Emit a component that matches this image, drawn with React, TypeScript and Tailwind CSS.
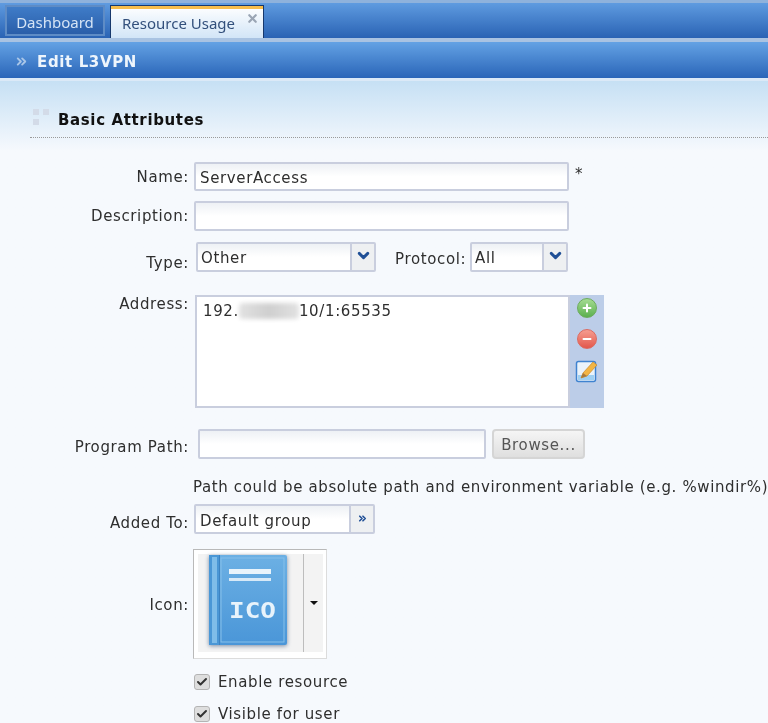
import { Check, ChevronDown, ChevronsRight, Minus, Plus, X } from "lucide-react";
import type { ReactNode } from "react";

const inputBox =
  "border-2 border-[#c9cede] bg-gradient-to-b from-[#eef1f5] via-white to-white rounded-[2px]";

function Label({ children, className = "" }: { children: ReactNode; className?: string }) {
  return <div className={`w-[189px] shrink-0 whitespace-nowrap text-right ${className}`}>{children}</div>;
}

function Select({ value, className }: { value: string; className: string }) {
  return (
    <div className={`${inputBox} flex h-[30px] ${className}`}>
      <div className="flex-1 pl-[3px] pt-[5px]">{value}</div>
      <div className="flex w-[24px] justify-center border-l-2 border-[#c9cede] bg-[#eef0f2] pt-[3px]">
        <ChevronDown className="h-[17px] w-[17px] text-[#1f4f96]" strokeWidth={4} />
      </div>
    </div>
  );
}

function BookIcon() {
  return (
    <svg width="80" height="94" viewBox="0 0 80 94" className="tracking-normal drop-shadow-[0_1px_2px_rgba(40,70,110,0.6)]">
      <defs>
        <linearGradient id="cover" x1="0" y1="0" x2="0" y2="1">
          <stop offset="0" stopColor="#6cb0e4" />
          <stop offset="1" stopColor="#4a96d8" />
        </linearGradient>
      </defs>
      <rect x="0" y="1" width="78" height="90" rx="2" fill="url(#cover)" />
      <rect x="0" y="1" width="10" height="90" fill="#4a97d6" />
      <rect x="3" y="3" width="5" height="86" fill="#7fbde9" />
      <rect x="10" y="1" width="1" height="90" fill="#3c83c2" />
      <rect x="12" y="4" width="63" height="84" fill="none" stroke="#86c0ea" strokeWidth="1" />
      <rect x="20" y="15" width="42" height="5" fill="#e8f3fb" />
      <rect x="20" y="24" width="42" height="3" fill="#d7e9f7" />
      <text
        x="20"
        y="64"
        textLength="47"
        lengthAdjust="spacingAndGlyphs"
        fontFamily="'DejaVu Sans Mono', monospace"
        fontSize="22"
        fontWeight="700"
        fill="#e8f3fb"
      >
        ICO
      </text>
    </svg>
  );
}

function Checkbox({ label, className = "" }: { label: string; className?: string }) {
  return (
    <div className={`flex items-center pl-[194px] ${className}`}>
      <div className="flex h-[16px] w-[16px] items-center justify-center rounded-[3px] border border-[#b4b4b4] bg-[#dedede]">
        <Check className="h-[12px] w-[12px] text-[#333]" strokeWidth={4} />
      </div>
      <span className="ml-[8px] pt-[1px]">{label}</span>
    </div>
  );
}

export default function App() {
  return (
    <div className="h-[723px] w-[768px] overflow-hidden bg-[#f6f9fd] font-['DejaVu_Sans',sans-serif] text-[15px] leading-[18px] tracking-[0.63px] text-[#2e2e2e] blur-[0.5px]">
      {/* Tabs */}
      <div className="flex h-[38px] items-end gap-[5px] border-t-[3px] border-[#8fb2dc] bg-gradient-to-b from-[#5f9be0] to-[#2a63b4] pl-[5px] font-['Noto_Sans',sans-serif] tracking-normal">
        <div className="mb-[2px] flex h-[31px] w-[100px] items-center justify-center border-2 border-[#5e8cc6] bg-gradient-to-b from-[#3f7cc8] to-[#2a5ea9] pt-[3px] text-[#d5e4f5]">
          Dashboard
        </div>
        <div className="relative flex h-[33px] w-[154px] items-center border border-b-0 border-[#17386c] bg-gradient-to-b from-white to-[#d2e5f7] pl-[11px] pt-[1px] text-[#33507c] before:absolute before:inset-x-0 before:top-0 before:h-[3px] before:bg-[#f7bd4b]">
          Resource Usage
          <X className="absolute right-[4px] top-[6px] h-[13px] w-[13px] text-[#9aa5b4]" strokeWidth={4} />
        </div>
      </div>
      <div className="h-[4px] bg-[#a9c3e2]" />
      {/* Header */}
      <div className="flex h-[36px] items-center bg-gradient-to-b from-[#64a2e4] to-[#2a65b8] pl-[14px] pt-[3px] text-[#eef5fc]">
        <ChevronsRight className="h-[15px] w-[15px] text-[#a9c6e8]" strokeWidth={3} />
        <span className="ml-[8px] font-bold">Edit L3VPN</span>
      </div>
      <div className="h-[3px] bg-[#dbe9f7]" />

      {/* Section */}
      <div className="h-[700px] bg-gradient-to-b from-[#c6e0f4] to-[#f6f9fd] to-[10%]">
        <div className="relative ml-[30px] flex h-[57px] items-end border-b border-dotted border-[#9a9a9a] pb-[8px] pl-[28px]">
          <div className="absolute left-[3px] top-[28px] grid grid-cols-2 gap-[4px]">
            <div className="h-[6px] w-[6px] bg-[#d3dbe8]" />
            <div className="h-[6px] w-[6px] bg-[#d3dbe8]" />
            <div className="h-[6px] w-[6px] bg-[#d3dbe8]" />
          </div>
          <span className="font-bold text-[#111]">Basic Attributes</span>
        </div>

        {/* Name */}
        <div className="mt-[24px] flex">
          <Label className="pt-[6px]">Name:</Label>
          <div className={`${inputBox} ml-[5px] h-[29px] w-[375px] pl-[4px] pt-[5px]`}>ServerAccess</div>
          <span className="ml-[6px] pt-[3px]">*</span>
        </div>

        {/* Description */}
        <div className="mt-[10px] flex">
          <Label className="pt-[6px]">Description:</Label>
          <div className={`${inputBox} ml-[5px] h-[30px] w-[375px]`} />
        </div>

        {/* Type / Protocol */}
        <div className="mt-[11px] flex">
          <Label className="pt-[12px]">Type:</Label>
          <Select value="Other" className="ml-[7px] w-[180px]" />
          <span className="ml-[19px] w-[71px] whitespace-nowrap pt-[8px]">Protocol:</span>
          <Select value="All" className="ml-[4px] w-[98px]" />
        </div>

        {/* Address */}
        <div className="mt-[23px] flex">
          <Label>Address:</Label>
          <div className="ml-[6px] flex h-[113px] w-[409px]">
            <div className="w-[375px] border-2 border-[#c9cede] bg-white pl-[6px] pt-[5px]">
              <div className="flex">
                <span>192.</span>
                <div className="mt-[1px] h-[16px] w-[60px] rounded-[4px] bg-gradient-to-r from-[#e2e2e2] via-[#cfcfcf] to-[#e2e2e2] blur-[2px]" />
                <span>10/1:65535</span>
              </div>
            </div>
            <div className="flex w-[34px] flex-col items-center gap-[11px] bg-[#bccde8] pt-[3px]">
              <div className="flex h-[20px] w-[20px] items-center justify-center rounded-full border border-[#6cab5c] bg-gradient-to-b from-[#a4dc92] to-[#5bb04f]">
                <Plus className="h-[12px] w-[12px] text-white" strokeWidth={4} />
              </div>
              <div className="flex h-[20px] w-[20px] items-center justify-center rounded-full border border-[#dc6a60] bg-gradient-to-b from-[#f59c90] to-[#e2574c]">
                <Minus className="h-[12px] w-[12px] text-white" strokeWidth={4} />
              </div>
              <svg width="24" height="24" viewBox="0 0 24 24" className="-mt-[1px]">
                <rect x="1.5" y="2.5" width="19" height="20" rx="2" fill="#eaf3fb" stroke="#3f83d0" strokeWidth="1.5" />
                <rect x="3" y="16" width="16" height="5" fill="#9fd0f2" />
                <path d="M6 19 L8 14 L18 3 L22 6 L12 17 Z" fill="#f2b544" stroke="#c98a2a" strokeWidth="0.7" />
                <path d="M6 19 L8 14 L12 17 Z" fill="#a8793c" />
              </svg>
            </div>
          </div>
        </div>

        {/* Program Path */}
        <div className="mt-[21px] flex">
          <Label className="pt-[9px]">Program Path:</Label>
          <div className={`${inputBox} ml-[9px] h-[30px] w-[288px]`} />
          <div className="ml-[6px] flex h-[30px] w-[93px] items-center justify-center rounded-[4px] border-2 border-[#d5d5d5] bg-gradient-to-b from-[#f5f5f5] to-[#dfdfdf] pt-[2px] text-[#555]">
            Browse...
          </div>
        </div>

        {/* Hint */}
        <div className="mt-[19px] whitespace-nowrap pl-[193px]">
          Path could be absolute path and environment variable (e.g. %windir%)
        </div>

        {/* Added To */}
        <div className="mt-[8px] flex">
          <Label className="pt-[10px]">Added To:</Label>
          <div className={`${inputBox} ml-[5px] flex h-[30px] w-[181px]`}>
            <div className="flex-1 pl-[4px] pt-[6px]">Default group</div>
            <div className="flex w-[24px] justify-center border-l-2 border-[#c9cede] bg-[#eef0f2] pt-[7px]">
              <ChevronsRight className="h-[11px] w-[11px] text-[#1f4f96]" strokeWidth={3.5} />
            </div>
          </div>
        </div>

        {/* Icon */}
        <div className="mt-[15px] flex">
          <Label className="pt-[47px]">Icon:</Label>
          <div className="ml-[4px] flex h-[110px] w-[134px] border border-[#b9b9b9] border-b-[#dcdcdc] border-r-[#dcdcdc] bg-white pb-[6px] pl-[4px] pr-[4px] pt-[4px]">
            <div className="flex flex-1 items-start bg-[#f3f3f3] pl-[11px]">
              <BookIcon />
              <div className="ml-[14px] flex h-full w-[20px] items-center justify-center border-l border-[#bdbdbd]">
                <div className="h-0 w-0 border-x-[4px] border-t-[4px] border-x-transparent border-t-[#111]" />
              </div>
            </div>
          </div>
        </div>

        {/* Checkboxes */}
        <Checkbox label="Enable resource" className="mt-[13px]" />
        <Checkbox label="Visible for user" className="mt-[13px]" />
      </div>
    </div>
  );
}
